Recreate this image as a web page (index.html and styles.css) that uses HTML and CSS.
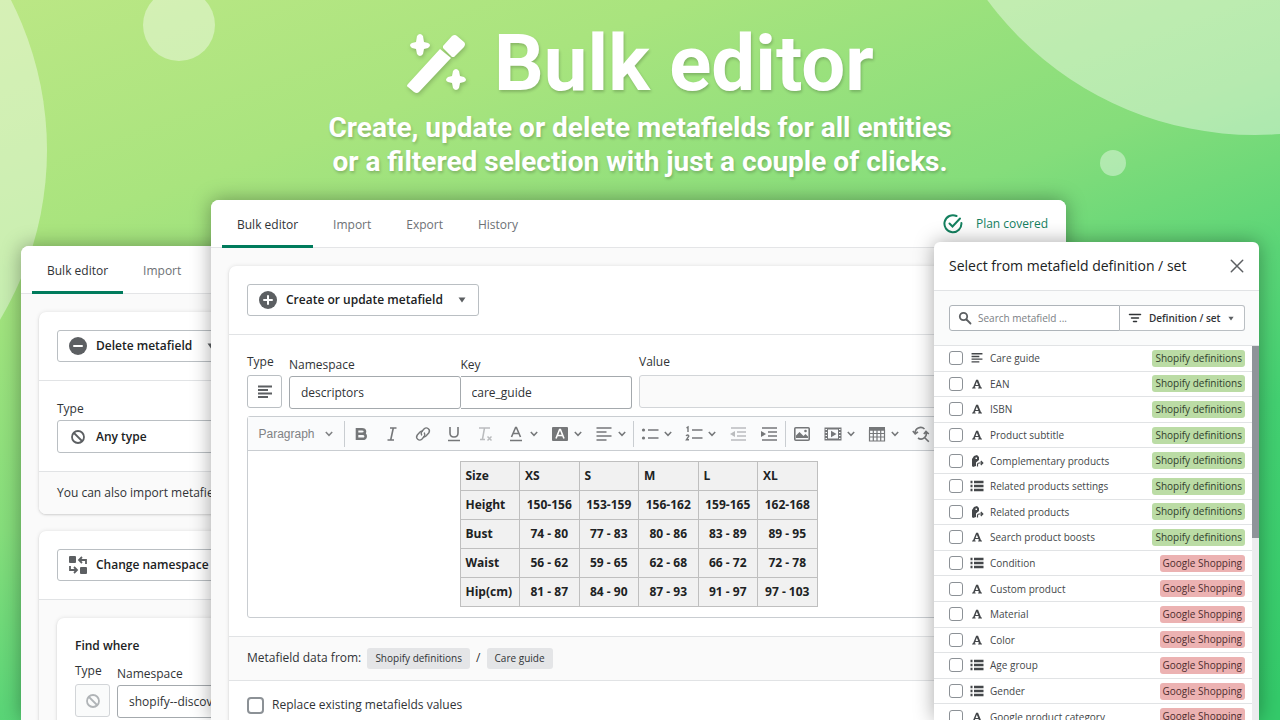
FILE: index.html
```html
<!DOCTYPE html>
<html lang="en">
<head>
<meta charset="utf-8">
<title>Bulk editor</title>
<link rel="stylesheet" href="styles.css">
</head>
<body>
<svg class="sprite" aria-hidden="true">
  <symbol id="wand" viewBox="0 0 60 60"><path d="M2 50 34 15 45 24 13 58Q11 60 8 58L2 53Q0 52 2 50ZM37 12 46 2Q49 0 51 2L58 8Q60 10 58 13L48 23 46 23 37 14ZM11 2Q14-2 17 2L18 8 22 9Q26 11 22 14L18 15 17 20Q14 24 11 20L10 15 6 14Q2 11 6 9L10 8ZM47 37Q50 33 53 37L54 42 58 43Q62 46 58 48L54 49 53 54Q50 58 47 54L46 49 42 48Q38 46 42 43L46 42Z"/></symbol>
  <symbol id="plus" viewBox="0 0 18 18"><circle cx="9" cy="9" r="9"/><path d="M9 5v8M5 9h8" stroke="#fff" stroke-width="2" stroke-linecap="round"/></symbol>
  <symbol id="minus" viewBox="0 0 18 18"><circle cx="9" cy="9" r="9"/><path d="M5 9h8" stroke="#fff" stroke-width="2" stroke-linecap="round"/></symbol>
  <symbol id="none" viewBox="0 0 18 18"><g fill="none" stroke="currentColor" stroke-width="1.800"><circle cx="9" cy="9" r="6"/><path d="m5 5 8 8"/></g></symbol>
  <symbol id="swap" viewBox="0 0 18 18"><rect x="0" y="0" width="7" height="7" rx="1"/><rect x="11" y="11" width="7" height="7" rx="1"/><path d="M17 8V4h-6M13 1l-3 3 3 3M1 10v4h6M5 11l3 3-3 3" fill="none" stroke="currentColor" stroke-width="1.800"/></symbol>
  <symbol id="caret" viewBox="0 0 8 6"><path d="M.5.5h7L4 5.500Z"/></symbol>
  <symbol id="text" viewBox="-1 -1 18 18"><path d="M1 2.500h14M1 6h10M1 9.500h14M1 13h10" stroke="currentColor" stroke-width="1.800"/></symbol>
  <symbol id="check" viewBox="0 0 20 20"><g fill="none" stroke="currentColor" stroke-width="2" stroke-linecap="round"><path d="M13.500 2A8.500 8.500 0 1 0 18.400 9"/><path d="m6.500 9.500 3 3L17 4.500"/></g></symbol>
  <symbol id="close" viewBox="0 0 14 14"><path d="m2 2 10 10M12 2 2 12" stroke="currentColor" stroke-width="1.300" stroke-linecap="round"/></symbol>
  <symbol id="search" viewBox="0 0 14 14"><g fill="none" stroke="currentColor" stroke-width="1.800" stroke-linecap="round"><circle cx="5.500" cy="5.500" r="3.700"/><path d="m8.500 8.500 4 4"/></g></symbol>
  <symbol id="filter" viewBox="0 0 14 14"><path d="M1.500 3.500h11M3.500 7h7M5.500 10.500h3" stroke="currentColor" stroke-width="1.500" stroke-linecap="round"/></symbol>
  <symbol id="letter" viewBox="-1 -1 16 16"><path fill-rule="evenodd" d="M6 2h2.200L11.700 11h1v1H8.300v-1h1L8.700 9.200H5L4.400 11h1v1h-4v-1h1ZM5.400 8.200h2.900L6.800 4.300Z"/></symbol>
  <symbol id="ref" viewBox="0 0 14 14"><path fill-rule="evenodd" d="M2 5 4 2 7 1l2 2v3L6 8.500V12l-3 1-1-1ZM5.500 3.500h1.500v1.500h-1.500Z"/><path d="M7.500 12.500v-2q0-1.500 1.500-1.500H12.500M10.800 7l2 2-2 2" fill="none" stroke="currentColor" stroke-width="1.200"/></symbol>
  <symbol id="rows" viewBox="0 0 14 14"><path d="M.5 3h2M.5 7h2M.5 11h2M4 3h9.500M4 7h9.500M4 11h9.500" stroke="currentColor" stroke-width="2.400"/></symbol>
  <symbol id="chev" viewBox="0 0 8 6"><path d="m.8 1 3.200 3.300L7.200 1" fill="none" stroke="currentColor" stroke-width="1.500"/></symbol>
  <symbol id="bold" viewBox="0 0 18 18"><path d="M5 3v12M5 4.200h5q3 0 3 2.200T10 8.700H5h5.500q3.200 0 3.200 2.600T10.500 13.800H5" fill="none" stroke="currentColor" stroke-width="2.600"/></symbol>
  <symbol id="italic" viewBox="0 0 18 18"><path d="M7 3h6.500M4.500 15H11M10.300 3 7.700 15" fill="none" stroke="currentColor" stroke-width="1.600"/></symbol>
  <symbol id="link" viewBox="0 0 18 18"><g fill="none" stroke="currentColor" stroke-width="1.400" stroke-linecap="round"><path d="M7.600 9.900Q6.500 8 8 6.300L10.200 3.800Q12.200 2 14.300 3.700T14.700 8L12 11Q10.800 12 9.800 11.700"/><path d="M10.400 8.100Q11.500 10 10 11.700L7.800 14.200Q5.800 16 3.700 14.300T3.300 10L6 7Q7.200 6 8.200 6.300"/></g></symbol>
  <symbol id="under" viewBox="0 0 18 18"><path d="M5 2v6q0 4 4 4t4-4V2M3 15.500h12" fill="none" stroke="currentColor" stroke-width="1.600"/></symbol>
  <symbol id="clear" viewBox="0 0 18 18"><path d="M3 3h11M8.500 3 6.500 14M4 14.500h5M11.500 11.500l4 4M15.500 11.500l-4 4" fill="none" stroke="currentColor" stroke-width="1.500"/></symbol>
  <symbol id="color" viewBox="0 0 18 18"><path d="M4.500 12 8.600 2.500h.8L13.500 12M6 8.500h6M3 15.500h12" fill="none" stroke="currentColor" stroke-width="1.600"/></symbol>
  <symbol id="bgcolor" viewBox="0 0 18 18"><rect x="1" y="2" width="16" height="14" rx="1"/><path d="M5 13.500 8.600 4.500h.8L13 13.500M6.500 10.500h5" fill="none" stroke="#fff" stroke-width="1.600"/></symbol>
  <symbol id="align" viewBox="0 0 18 18"><path d="M1.500 3h15M1.500 7h10M1.500 11h15M1.500 15h10" stroke="currentColor" stroke-width="1.500"/></symbol>
  <symbol id="ul" viewBox="0 0 18 18"><circle cx="2.500" cy="5" r="1.600"/><circle cx="2.500" cy="13" r="1.600"/><path d="M7 5h10.500M7 13h10.500" stroke="currentColor" stroke-width="1.500"/></symbol>
  <symbol id="ol" viewBox="0 0 18 18"><path d="M7 5h10.500M7 13h10.500M1.500 2.800 3 2v5M1.200 11q.3-1 1.400-1t1.200 1L1.400 14.800H4" fill="none" stroke="currentColor" stroke-width="1.400"/></symbol>
  <symbol id="outdent" viewBox="0 0 18 18"><path d="M2 3h15M8 7h9M8 11h9M2 15h15" stroke="currentColor" stroke-width="1.500"/><path d="M6 6v6L1 9Z"/></symbol>
  <symbol id="indent" viewBox="0 0 18 18"><path d="M2 3h15M8 7h9M8 11h9M2 15h15" stroke="currentColor" stroke-width="1.500"/><path d="M1 6v6l5-3Z"/></symbol>
  <symbol id="image" viewBox="0 0 18 18"><rect x="1.800" y="2.800" width="14.400" height="12.400" rx="1" fill="none" stroke="currentColor" stroke-width="1.600"/><path d="M3 13V10.500L6.500 7l4 4L12.500 9 15 11.500V13Z"/><circle cx="12.500" cy="6" r="1.300"/></symbol>
  <symbol id="media" viewBox="0 0 18 18"><path fill-rule="evenodd" d="M.5 2.500h17v13H.5ZM4 4.500v9h10v-9ZM1.500 4v1h1.500V4Zm0 3v1h1.500V7Zm0 3v1h1.500v-1Zm0 3v1h1.500v-1ZM15 4v1h1.500V4Zm0 3v1h1.500V7Zm0 3v1h1.500v-1Zm0 3v1h1.500v-1Z"/><path d="M7 5.800v6.400L12.500 9Z"/></symbol>
  <symbol id="grid" viewBox="0 0 18 18"><path d="M1.500 5h15v11h-15ZM1.500 8.500h15M1.500 12h15M5.300 5v11M9 5v11M12.700 5v11" fill="none" stroke="currentColor" stroke-width="1.200"/><path d="M1 2h16v3.500H1Z"/></symbol>
  <symbol id="find" viewBox="0 0 18 18"><g fill="none" stroke="currentColor" stroke-width="1.600"><path d="M12.500 4A5.500 5.500 0 0 0 3.200 8.500M.8 6l2.400 3L6 6.800M6 13a5 5 0 0 0 6.500-.5A5 5 0 0 0 14 7M16.800 9 14 6.500 11.800 9M12.500 12.500 16.800 16.800"/></g></symbol>
</svg>

<main class="stage">
  <div class="bubble bubble-left"></div>
  <div class="bubble bubble-small"></div>
  <div class="bubble bubble-right"></div>
  <div class="bubble bubble-dot"></div>

  <header class="hero">
    <h1><svg class="wand"><use href="#wand"/></svg>Bulk editor</h1>
    <p>Create, update or delete metafields for all entities<br>or a filtered selection with just a couple of clicks.</p>
  </header>

  <section class="window window-back">
    <nav class="tabs"><a class="tab active" href="#b">Bulk editor</a><a class="tab" href="#i">Import</a></nav>
    <div class="window-body">
      <div class="card">
        <div class="section"><button class="btn"><svg class="i18"><use href="#minus"/></svg>Delete metafield<svg class="caret"><use href="#caret"/></svg></button></div>
        <div class="section">
          <label class="label" for="anytype">Type</label>
          <button class="btn btn-wide" id="anytype"><svg class="i18"><use href="#none"/></svg>Any type</button>
        </div>
        <div class="section subdued note">You can also import metafields from a file.</div>
      </div>
      <div class="card">
        <div class="section"><button class="btn"><svg class="i18"><use href="#swap"/></svg>Change namespace or key<svg class="caret"><use href="#caret"/></svg></button></div>
        <div class="section subdued">
          <div class="card inner">
            <h2>Find where</h2>
            <div class="fields">
              <div class="field"><label class="label" for="t2">Type</label><button class="type-btn" id="t2" disabled aria-label="Type"><svg class="i18"><use href="#none"/></svg></button></div>
              <div class="field grow low"><label class="label" for="n2">Namespace</label><input class="input" id="n2" value="shopify--discovery"></div>
            </div>
          </div>
        </div>
      </div>
    </div>
  </section>

  <section class="window window-main">
    <nav class="tabs"><a class="tab active" href="#b">Bulk editor</a><a class="tab" href="#i">Import</a><a class="tab" href="#e">Export</a><a class="tab" href="#h">History</a><span class="plan"><svg class="i20"><use href="#check"/></svg>Plan covered</span></nav>
    <div class="window-body">
      <div class="card">
        <div class="section"><button class="btn"><svg class="i18"><use href="#plus"/></svg>Create or update metafield<svg class="caret"><use href="#caret"/></svg></button></div>
        <div class="section form">
          <div class="fields">
            <div class="field"><label class="label" for="t1">Type</label><button class="type-btn" id="t1" aria-label="Type"><svg class="i18"><use href="#text"/></svg></button></div>
            <div class="pair">
              <div class="field low"><label class="label" for="n1">Namespace</label><input class="input" id="n1" value="descriptors"></div>
              <div class="field low"><label class="label" for="k1">Key</label><input class="input" id="k1" value="care_guide"></div>
            </div>
            <div class="field grow"><label class="label" for="v1">Value</label><input class="input" id="v1" disabled></div>
          </div>
          <div class="editor">
            <div class="toolbar">
              <button class="tool para">Paragraph<svg class="chev"><use href="#chev"/></svg></button>
              <i class="sep"></i>
              <button class="tool" aria-label="Bold"><svg class="i18"><use href="#bold"/></svg></button>
              <button class="tool" aria-label="Italic"><svg class="i18"><use href="#italic"/></svg></button>
              <button class="tool" aria-label="Link"><svg class="i18"><use href="#link"/></svg></button>
              <button class="tool" aria-label="Underline"><svg class="i18"><use href="#under"/></svg></button>
              <button class="tool off" aria-label="Remove format"><svg class="i18"><use href="#clear"/></svg></button>
              <button class="tool drop" aria-label="Font colour"><svg class="i18"><use href="#color"/></svg><svg class="chev"><use href="#chev"/></svg></button>
              <button class="tool drop" aria-label="Background colour"><svg class="i18"><use href="#bgcolor"/></svg><svg class="chev"><use href="#chev"/></svg></button>
              <button class="tool drop" aria-label="Alignment"><svg class="i18"><use href="#align"/></svg><svg class="chev"><use href="#chev"/></svg></button>
              <i class="sep"></i>
              <button class="tool drop" aria-label="Bulleted list"><svg class="i18"><use href="#ul"/></svg><svg class="chev"><use href="#chev"/></svg></button>
              <button class="tool drop" aria-label="Numbered list"><svg class="i18"><use href="#ol"/></svg><svg class="chev"><use href="#chev"/></svg></button>
              <button class="tool off" aria-label="Outdent"><svg class="i18"><use href="#outdent"/></svg></button>
              <button class="tool" aria-label="Indent"><svg class="i18"><use href="#indent"/></svg></button>
              <i class="sep"></i>
              <button class="tool" aria-label="Image"><svg class="i18"><use href="#image"/></svg></button>
              <button class="tool drop" aria-label="Media"><svg class="i18"><use href="#media"/></svg><svg class="chev"><use href="#chev"/></svg></button>
              <button class="tool drop" aria-label="Table"><svg class="i18"><use href="#grid"/></svg><svg class="chev"><use href="#chev"/></svg></button>
              <button class="tool" aria-label="Find"><svg class="i18"><use href="#find"/></svg></button>
            </div>
            <div class="content">
              <table class="sizes">
                <tr><th>Size</th><th>XS</th><th>S</th><th>M</th><th>L</th><th>XL</th></tr>
                <tr><th>Height</th><td>150-156</td><td>153-159</td><td>156-162</td><td>159-165</td><td>162-168</td></tr>
                <tr><th>Bust</th><td>74 - 80</td><td>77 - 83</td><td>80 - 86</td><td>83 - 89</td><td>89 - 95</td></tr>
                <tr><th>Waist</th><td>56 - 62</td><td>59 - 65</td><td>62 - 68</td><td>66 - 72</td><td>72 - 78</td></tr>
                <tr><th>Hip(cm)</th><td>81 - 87</td><td>84 - 90</td><td>87 - 93</td><td>91 - 97</td><td>97 - 103</td></tr>
              </table>
            </div>
          </div>
        </div>
        <div class="section subdued origin">Metafield data from: <span class="chip">Shopify definitions</span> / <span class="chip">Care guide</span></div>
        <div class="section replace"><input class="box" type="checkbox" id="rep"><label for="rep">Replace existing metafields values</label></div>
      </div>
    </div>
  </section>

  <section class="window modal">
    <header class="modal-head"><h2>Select from metafield definition / set</h2><button class="close" aria-label="Close"><svg class="i16"><use href="#close"/></svg></button></header>
    <div class="modal-search">
      <div class="search"><svg class="i14"><use href="#search"/></svg><input aria-label="Search metafield" placeholder="Search metafield ..."></div>
      <button class="filter"><svg class="i14"><use href="#filter"/></svg>Definition / set<svg class="caret small"><use href="#caret"/></svg></button>
    </div>
    <div class="scroller">
      <ul class="list">
        <li><input class="box" type="checkbox" id="c1"><label for="c1"><svg class="i14"><use href="#text"/></svg>Care guide</label><span class="tag">Shopify definitions</span></li>
        <li><input class="box" type="checkbox" id="c2"><label for="c2"><svg class="i14"><use href="#letter"/></svg>EAN</label><span class="tag">Shopify definitions</span></li>
        <li><input class="box" type="checkbox" id="c3"><label for="c3"><svg class="i14"><use href="#letter"/></svg>ISBN</label><span class="tag">Shopify definitions</span></li>
        <li><input class="box" type="checkbox" id="c4"><label for="c4"><svg class="i14"><use href="#letter"/></svg>Product subtitle</label><span class="tag">Shopify definitions</span></li>
        <li><input class="box" type="checkbox" id="c5"><label for="c5"><svg class="i14"><use href="#ref"/></svg>Complementary products</label><span class="tag">Shopify definitions</span></li>
        <li><input class="box" type="checkbox" id="c6"><label for="c6"><svg class="i14"><use href="#rows"/></svg>Related products settings</label><span class="tag">Shopify definitions</span></li>
        <li><input class="box" type="checkbox" id="c7"><label for="c7"><svg class="i14"><use href="#ref"/></svg>Related products</label><span class="tag">Shopify definitions</span></li>
        <li><input class="box" type="checkbox" id="c8"><label for="c8"><svg class="i14"><use href="#letter"/></svg>Search product boosts</label><span class="tag">Shopify definitions</span></li>
        <li><input class="box" type="checkbox" id="c9"><label for="c9"><svg class="i14"><use href="#rows"/></svg>Condition</label><span class="tag google">Google Shopping</span></li>
        <li><input class="box" type="checkbox" id="c10"><label for="c10"><svg class="i14"><use href="#letter"/></svg>Custom product</label><span class="tag google">Google Shopping</span></li>
        <li><input class="box" type="checkbox" id="c11"><label for="c11"><svg class="i14"><use href="#letter"/></svg>Material</label><span class="tag google">Google Shopping</span></li>
        <li><input class="box" type="checkbox" id="c12"><label for="c12"><svg class="i14"><use href="#letter"/></svg>Color</label><span class="tag google">Google Shopping</span></li>
        <li><input class="box" type="checkbox" id="c13"><label for="c13"><svg class="i14"><use href="#rows"/></svg>Age group</label><span class="tag google">Google Shopping</span></li>
        <li><input class="box" type="checkbox" id="c14"><label for="c14"><svg class="i14"><use href="#rows"/></svg>Gender</label><span class="tag google">Google Shopping</span></li>
        <li><input class="box" type="checkbox" id="c15"><label for="c15"><svg class="i14"><use href="#letter"/></svg>Google product category</label><span class="tag google">Google Shopping</span></li>
      </ul>
      <div class="track"><div class="thumb"></div></div>
    </div>
  </section>
</main>
</body>
</html>
```
FILE: styles.css
```css
* { box-sizing: border-box; }
body { margin: 0; font: 12px/20px "Open Sans", "Noto Sans", sans-serif; color: #303336; }
button, input { font: inherit; color: inherit; margin: 0; }
h1, h2, p, ul { margin: 0; padding: 0; }
svg { display: block; flex: none; fill: currentColor; }
.sprite { position: absolute; width: 0; height: 0; }
.i14 { width: 14px; height: 14px; }
.i16 { width: 16px; height: 16px; }
.i18 { width: 18px; height: 18px; }
.i20 { width: 20px; height: 20px; }
.caret { width: 8px; height: 6px; color: #5c5f62; }
.caret.small { width: 6px; height: 5px; }

.stage { position: relative; height: 100vh; overflow: hidden; background: linear-gradient(160deg, #bbe785 0%, #a9e47e 21%, #85dd7b 45%, #5bd577 60%, #43d071 73%, #34ca6a 98%); }
.bubble { position: absolute; border-radius: 50%; background: rgba(255, 255, 255, .4); }
.bubble-left { left: -613px; top: -180px; width: 660px; height: 660px; }
.bubble-small { left: 143px; top: -11px; width: 72px; height: 72px; }
.bubble-right { right: -308px; top: -531px; width: 666px; height: 666px; }
.bubble-dot { right: 154px; top: 150px; width: 26px; height: 26px; }

.hero { position: relative; padding-top: 24px; text-align: center; color: #fff; font-weight: 700; text-shadow: 1px 2px 3px rgba(0, 0, 0, .2); }
.hero h1 { display: flex; justify-content: center; align-items: center; gap: 28px; font-family: Roboto, sans-serif; font-size: 78px; line-height: 80px; }
.hero p { padding-top: 7px; font-family: Roboto, sans-serif; font-size: 28px; line-height: 34px; }
.wand { width: 60px; height: 60px; filter: drop-shadow(1px 2px 2px rgba(0, 0, 0, .2)); }

.window { position: absolute; display: flex; flex-direction: column; bottom: 0; border-radius: 8px 8px 0 0; background: #fafafa; overflow: hidden; box-shadow: 0 0 20px rgba(0, 0, 0, .35); }
.window-back { left: 21px; width: 50%; top: 246px; }
.window-main { left: 211px; right: 214px; top: 200px; }
.tabs { display: flex; gap: 5px; height: 48px; flex: none; padding: 0 18px 0 11px; background: #fff; border-bottom: 1px solid #e4e5e7; }
.tab { padding: 15px 15px 0; line-height: 20px; height: 48px; color: #6d7175; text-decoration: none; }
.tab.active { color: #303336; border-bottom: 3px solid #007b5c; border-radius: 2px 2px 0 0; }
.plan { display: flex; align-items: center; gap: 13px; margin-left: auto; color: #14805f; }
.window-body { padding: 18px 18px 0; display: flex; flex-direction: column; gap: 17px; }
.card { background: #fff; border-radius: 7px; box-shadow: 0 0 4px rgba(23, 24, 24, .1), 0 1px 2px rgba(0, 0, 0, .12); }
.section { padding: 18px; }
.section + .section { border-top: 1px solid #e1e3e5; }
.form { padding-top: 17px; }
.subdued { background: #fafafa; border-radius: 0 0 7px 7px; }
.note { padding: 11px 18px; }
.btn { display: flex; align-items: center; gap: 9px; height: 32px; padding: 0 12px 0 11px; border: 1px solid #babfc3; border-radius: 3px; background: #fff; font-weight: 600; color: #202223; }
.btn .caret { margin-left: 6px; }
.btn svg:first-child, .type-btn { color: #5c5f62; }
.btn-wide { width: 100%; height: 33px; margin-top: 1px; }
.label { display: block; }
.inner { padding: 18px; }
.inner h2 { font-size: 12px; font-weight: 600; line-height: 20px; color: #202223; }
.inner .fields { padding-top: 5px; }

.fields { display: flex; align-items: flex-start; gap: 7px; }
.field { display: flex; flex-direction: column; gap: 3px; }
.low { padding-top: 3px; gap: 1px; }
.grow { flex: 1; }
.pair { display: flex; width: 343px; }
.pair .field { flex: 1; }
.pair .field + .field .input { border-radius: 0 3px 3px 0; border-left: 0; }
.type-btn { display: grid; place-items: center; width: 35px; height: 33px; padding: 0; border: 1px solid #babfc3; border-radius: 3px; background: #fff; }
.type-btn:disabled { background: #fafbfb; border-color: #d2d5d8; color: #b0b4b7; }
.input { width: 100%; height: 33px; padding: 0 11px; border: 1px solid #a4a9ad; border-radius: 3px; background: #fff; }
.input:disabled { background: #fafafa; border-color: #d2d5d8; }

.editor { margin-top: 7px; border: 1px solid #c9cdd1; border-radius: 3px; }
.toolbar { display: flex; align-items: center; height: 34px; overflow: hidden; background: #fafbfc; border-bottom: 1px solid #c9cdd1; color: #757779; }
.tool { display: flex; align-items: center; justify-content: center; flex: none; width: 31px; height: 28px; padding: 0; border: 0; background: none; color: #757779; }
.drop { width: 44px; gap: 5px; }
.para { width: 95px; gap: 10px; font-family: "Liberation Sans", Arial, sans-serif; color: #808284; }
.chev { width: 8px; height: 6px; }
.tool.off { color: #babcbe; }
.sep { flex: none; width: 1px; height: 26px; background: #c9cdd1; margin-left: 1px; }
.content { padding: 10px 0; }
.sizes { margin: 0 auto; border-collapse: collapse; table-layout: fixed; width: 358px; background: #f1f1f1; color: #202223; font-weight: 700; }
.sizes th, .sizes td { height: 29px; padding: 0; border: 1px solid #bfbfbf; line-height: 20px; text-align: center; }
.sizes th { padding-left: 5px; text-align: left; }
.origin { padding: 11px 18px; border-radius: 0; }
.chip { display: inline-block; margin: 0 3px; padding: 0 8px; border-radius: 3px; background: #e4e5e7; font-size: 10px; line-height: 21px; }
.replace { display: flex; align-items: center; gap: 8px; padding: 14px 18px; }
.box { appearance: none; flex: none; width: 17px; height: 17px; border: 2px solid #8c9196; border-radius: 4px; background: #fff; }

.modal { right: 21px; top: 242px; width: 325px; border-radius: 6px 6px 0 0; background: #fff; }
.modal-head { display: flex; justify-content: space-between; align-items: center; flex: none; height: 49px; padding: 0 14px 0 15px; border-bottom: 1px solid #e1e3e5; }
.modal-head h2 { font-size: 14px; font-weight: 500; color: #202223; }
.close { padding: 0; border: 0; background: none; color: #5c5f62; }
.modal-search { display: flex; flex: none; padding: 14px 14px 14px 15px; background: #fafbfb; border-bottom: 1px solid #e1e3e5; font-size: 10px; }
.search { display: flex; align-items: center; gap: 6px; flex: 1; height: 26px; padding-left: 8px; border: 1px solid #aeb4b9; border-radius: 3px 0 0 3px; background: #fff; color: #5c5f62; }
.search input { flex: 1; min-width: 0; padding: 0; border: 0; background: none; }
.search input::placeholder { color: #7b8085; opacity: 1; }
.filter { display: flex; align-items: center; gap: 7px; width: 125px; height: 26px; padding: 0 8px; border: 1px solid #babfc3; border-left: 0; border-radius: 0 3px 3px 0; background: #fff; font-weight: 600; color: #303336; }
.scroller { display: flex; flex: 1; min-height: 0; }
.list { flex: 1; display: grid; grid-auto-rows: 1fr; height: 384px; list-style: none; font-size: 10px; color: #44474a; }
.list li { display: flex; align-items: center; padding: 0 7px 0 15px; border-bottom: 1px solid #e1e3e5; }
.list .box { width: 14px; height: 14px; border-width: 1px; border-radius: 3px; }
.list label { display: flex; align-items: center; flex: 1; gap: 6px; padding-left: 7px; }
.tag { padding: 0 3px; border-radius: 3px; background: #bbdca5; line-height: 17px; color: #30402c; }
.google { background: #ecb2b2; color: #4e2c2e; }
.track { width: 7px; background: #ececee; }
.thumb { width: 7px; height: 192px; background: #8f9499; }
```
